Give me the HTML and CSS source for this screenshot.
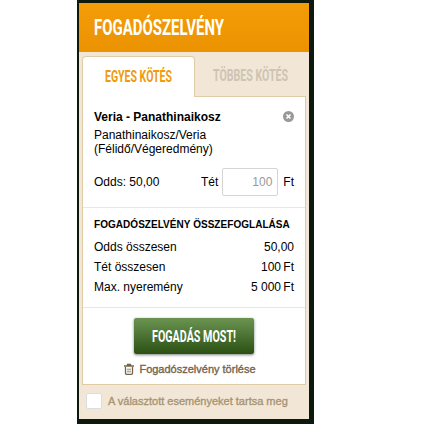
FILE: index.html
```html
<!DOCTYPE html>
<html lang="hu">
<head>
<meta charset="utf-8">
<title>Fogadószelvény</title>
<link rel="stylesheet" href="styles.css">
</head>
<body>
<main class="frame">
  <section class="slip">
    <header class="head">
      <svg class="title" width="134" height="36"><text x="0" y="26" textLength="130" lengthAdjust="spacingAndGlyphs">FOGADÓSZELVÉNY</text></svg>
    </header>
    <div class="content">
      <nav class="tabs">
        <a class="tab active"><svg width="70" height="26"><text x="0" y="19" textLength="67" lengthAdjust="spacingAndGlyphs">EGYES KÖTÉS</text></svg></a>
        <a class="tab"><svg width="78" height="26"><text x="0" y="19" textLength="75" lengthAdjust="spacingAndGlyphs">TÖBBES KÖTÉS</text></svg></a>
      </nav>
      <div class="panel">
        <div class="bet">
          <div class="row match"><b>Veria - Panathinaikosz</b>
            <svg class="close" width="11" height="11" viewBox="0 0 11 11"><circle cx="5.5" cy="5.5" r="5.5" fill="#999"/><path d="M3.500 3.500l4 4M7.500 3.500l-4 4" stroke="#fff" stroke-width="1.600"/></svg>
          </div>
          <p class="pick">Panathinaikosz/Veria<br>(Félidő/Végeredmény)</p>
          <div class="stake"><span class="odds">Odds: 50,00</span><label>Tét</label><span class="input">100</span><span>Ft</span></div>
        </div>
        <div class="summary">
          <h2>FOGADÓSZELVÉNY ÖSSZEFOGLALÁSA</h2>
          <div class="row"><span>Odds összesen</span><span>50,00</span></div>
          <div class="row"><span>Tét összesen</span><span class="money">100 Ft</span></div>
          <div class="row"><span>Max. nyeremény</span><span>5 <span class="money">000 Ft</span></span></div>
        </div>
        <div class="actions">
          <button class="place"><svg width="86" height="26"><text x="0" y="19" textLength="84" lengthAdjust="spacingAndGlyphs">FOGADÁS MOST!</text></svg></button>
          <a class="clear"><svg width="10" height="11" viewBox="0 0 10 11"><path d="M3.500 1.500V.5h3v1M0 2h10M1.500 3v6.300q0 1 1 1h5q1 0 1-1V3" fill="none" stroke="#74634a" stroke-width="1.300"/><path d="M4 4v5M6 4v5M3 5.500h4M3 7.500h4" stroke="#a59a88" stroke-width=".7"/></svg><span>Fogadószelvény törlése</span></a>
        </div>
      </div>
      <label class="keep"><span class="check"></span><span>A választott eseményeket tartsa meg</span></label>
    </div>
  </section>
</main>
</body>
</html>
```

FILE: styles.css
```css
* { box-sizing: border-box; }
body { margin: 0; background: #fff; font: 12px/14px "Liberation Sans", Arial, sans-serif; color: #000; }
svg { display: block; flex: none; overflow: visible; }
svg text { font-family: Roboto, sans-serif; font-weight: 700; font-size: 16.5px; fill: currentColor; }
.frame { width: 237px; height: 424px; margin-left: 77px; padding: 3px 5px 5px 2px; background: #0e190e; }
.slip { height: 416px; background: #f2e7d6; }
.head { height: 49px; padding: 6px 0 0 15px; background: linear-gradient(#f59d08, #ea9200); color: #fff; }
.head text { font-size: 22.5px; }
.content { padding: 4px 3px 0; }
.tabs { display: flex; height: 41px; }
.tab { width: 111px; padding: 6px 0 0 18px; color: #cdc4b5; }
.tab.active { position: relative; width: 113px; padding: 6px 0 0 22px; background: #fff; border: 1px solid #dfcba6; border-bottom: 0; border-radius: 4px 4px 0 0; color: #f09a0c; }
.panel { height: 289px; margin-top: -1px; background: #fff; border: 1px solid #dfcba6; }
.bet { height: 111px; padding: 13px 11px 0; border-bottom: 1px solid #ebe6de; }
.row { display: flex; justify-content: space-between; }
.match { height: 18px; }
.close { margin-top: 1px; }
.pick { margin: 0; }
.stake { display: flex; align-items: center; height: 28px; margin-top: 12px; }
.odds { flex: 1; }
.input { width: 56px; height: 28px; margin: 0 5px 0 4px; padding: 6px 5px; border: 1px solid #d5d5d5; border-radius: 2px; color: #999; text-align: right; }
.summary { height: 100px; padding: 10px 11px 0; border-bottom: 1px solid #ebe6de; }
.summary h2 { margin: 0 0 5px; font-size: 10px; line-height: 14px; letter-spacing: .04px; white-space: nowrap; }
.summary .row { height: 20px; line-height: 20px; }
.money { word-spacing: -1px; }
.actions { display: flex; flex-direction: column; align-items: center; padding-top: 10px; }
.place { width: 120px; height: 36px; padding: 5px 18px; border: 0; border-radius: 2px; background: linear-gradient(#6b9451, #2b5013); box-shadow: 0 1px 3px rgba(0,0,0,.5); color: #fff; }
.clear { display: flex; align-items: center; gap: 5px; margin: 8px 8px 0 0; color: #74634a; }
.clear, .keep { font-size: 11px; -webkit-text-stroke: .35px currentColor; white-space: nowrap; }
.keep { display: flex; align-items: center; height: 32px; padding-left: 4px; gap: 6px; color: #a89474; }
.check { width: 16px; height: 16px; background: #fff; border: 1px solid #ddd; border-radius: 2px; }
```
